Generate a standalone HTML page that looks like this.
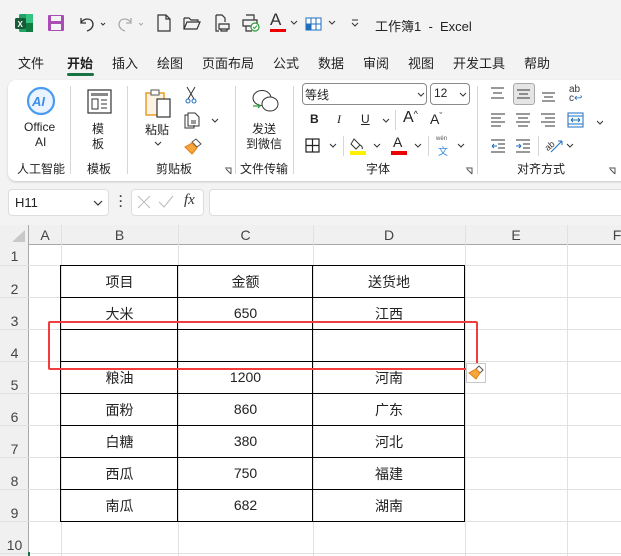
<!DOCTYPE html>
<html><head><meta charset="utf-8"><style>
*{margin:0;padding:0;box-sizing:border-box}
body{width:621px;height:556px;overflow:hidden;background:#f3f3f3;font-family:"Liberation Sans","Noto Sans CJK SC",sans-serif;color:#222;position:relative;font-size:13px}
.a{position:absolute;white-space:nowrap}
.t{font-size:13px}
.s{font-size:12px}
.sep{position:absolute;width:1px;background:#d6d6d6}
.g{position:absolute;background:#e1e1e1}
.tb{position:absolute;background:#000}
.c{position:absolute;text-align:center;font-size:14px;color:#222}
.rh{position:absolute;left:0;width:29px;text-align:center;font-size:14px;color:#444}
.ch{position:absolute;top:227px;text-align:center;font-size:14px;color:#444}
</style></head><body>
<svg class="a" style="left:14px;top:13px" width="20" height="20" viewBox="0 0 20 20"><rect x="5" y="1" width="14" height="18" rx="1.5" fill="#21a366"/><rect x="12" y="1" width="7" height="9" fill="#33c481"/><rect x="12" y="10" width="7" height="9" fill="#107c41"/><rect x="1" y="5" width="11" height="11" rx="1.5" fill="#185c37"/><text x="3.5" y="14" font-size="8" fill="#fff" font-family="Liberation Sans" font-weight="bold">X</text></svg>
<svg class="a" style="left:47px;top:14px" width="18" height="18" viewBox="0 0 18 18"><rect x="1" y="1" width="16" height="16" rx="1" fill="#a94db5"/><rect x="4" y="2" width="10" height="5" fill="#f3f3f3"/><rect x="4" y="10" width="10" height="6" fill="#f3f3f3"/></svg>
<svg class="a" style="left:77px;top:14px" width="34" height="18" viewBox="0 0 34 18"><path d="M4 4v5h5M4 9c2-5 11-6 12 1 0 4-3 6-6 7" fill="none" stroke="#333" stroke-width="1.3"/><path d="M24 9l2 2 2-2" fill="none" stroke="#333"/></svg>
<svg class="a" style="left:115px;top:14px" width="34" height="18" viewBox="0 0 34 18"><path d="M16 4v5h-5M16 9c-2-5-11-6-12 1 0 4 3 6 6 7" fill="none" stroke="#aaa" stroke-width="1.3"/><path d="M24 9l2 2 2-2" fill="none" stroke="#aaa"/></svg>
<svg class="a" style="left:156px;top:14px" width="16" height="18" viewBox="0 0 16 18"><path d="M2 1h8l4 4v12H2z M10 1v4h4" fill="none" stroke="#333" stroke-width="1.2"/></svg>
<svg class="a" style="left:183px;top:15px" width="18" height="16" viewBox="0 0 18 16"><path d="M1 3h5l2 2h7v2M1 3v11h13l3-7H4l-3 7" fill="none" stroke="#333" stroke-width="1.2"/></svg>
<svg class="a" style="left:213px;top:14px" width="18" height="18" viewBox="0 0 18 18"><path d="M3 1h6l3 3v4M3 1v16h3M6 10h10v5H6zM8 15v2h6v-2" fill="none" stroke="#333" stroke-width="1.2"/></svg>
<svg class="a" style="left:241px;top:14px" width="20" height="18" viewBox="0 0 20 18"><path d="M5 1h8v5M2 6h14v6H2zM5 12v5h6" fill="none" stroke="#333" stroke-width="1.2"/><circle cx="14" cy="13" r="4" fill="#fff" stroke="#2a9d3a" stroke-width="1.2"/><path d="M12 13l1.5 1.5 2.5-3" fill="none" stroke="#2a9d3a"/></svg>
<div class="a" style="left:270px;top:10px;font-size:17px;color:#333">A</div>
<div class="a" style="left:270px;top:29px;width:16px;height:3px;background:#e00"></div>
<svg class="a" style="left:290px;top:20px" width="8" height="6"><path d="M1 1l3 3 3-3" fill="none" stroke="#333"/></svg>
<svg class="a" style="left:305px;top:15px" width="17" height="16" viewBox="0 0 17 16"><rect x="1" y="3" width="15" height="12" fill="#fff" stroke="#1e6fc0"/><path d="M1 9h15M6 3v12M11 3v12" stroke="#1e6fc0"/><rect x="1" y="9" width="5" height="6" fill="#1e6fc0"/></svg>
<svg class="a" style="left:328px;top:20px" width="8" height="6"><path d="M1 1l3 3 3-3" fill="none" stroke="#333"/></svg>
<svg class="a" style="left:351px;top:19px" width="8" height="8"><path d="M1 1h6M1 4l3 3 3-3" fill="none" stroke="#333"/></svg>
<div class="a t" style="left:375px;top:16px">工作簿1&nbsp;&nbsp;-&nbsp;&nbsp;Excel</div>
<div class="a t" style="left:18px;top:53px">文件</div>
<div class="a t" style="left:67px;top:53px;font-weight:bold">开始</div>
<div class="a" style="left:67px;top:73px;width:27px;height:3px;background:#1a7343;border-radius:2px"></div>
<div class="a t" style="left:112px;top:53px">插入</div>
<div class="a t" style="left:157px;top:53px">绘图</div>
<div class="a t" style="left:202px;top:53px">页面布局</div>
<div class="a t" style="left:273px;top:53px">公式</div>
<div class="a t" style="left:318px;top:53px">数据</div>
<div class="a t" style="left:363px;top:53px">审阅</div>
<div class="a t" style="left:408px;top:53px">视图</div>
<div class="a t" style="left:453px;top:53px">开发工具</div>
<div class="a t" style="left:524px;top:53px">帮助</div>
<div class="a" style="left:8px;top:80px;width:640px;height:101px;background:#fff;border-radius:8px;box-shadow:0 1px 2px rgba(0,0,0,.18)"></div>
<svg class="a" style="left:25px;top:86px" width="32" height="30" viewBox="0 0 32 30"><circle cx="16" cy="15" r="13" fill="#eaf3ff" stroke="#4a9cf0" stroke-width="2.2"/><text x="7" y="20" font-size="13" font-weight="bold" font-style="italic" fill="#3b8ee8" font-family="Liberation Sans">AI</text></svg>
<div class="a s" style="left:24px;top:120px">Office</div>
<div class="a s" style="left:35px;top:135px">AI</div>
<div class="a s" style="left:17px;top:160px">人工智能</div>
<div class="sep" style="left:70px;top:86px;height:88px"></div>
<svg class="a" style="left:87px;top:89px" width="25" height="25" viewBox="0 0 25 25"><rect x="1" y="1" width="23" height="23" fill="none" stroke="#333" stroke-width="1.2"/><rect x="4" y="4" width="17" height="3" fill="#888"/><rect x="5" y="10" width="6" height="10" fill="none" stroke="#333"/><path d="M14 11h6M14 15h6M14 19h6" stroke="#333"/></svg>
<div class="a s" style="left:92px;top:120px">模</div>
<div class="a s" style="left:92px;top:135px">板</div>
<div class="a s" style="left:87px;top:160px">模板</div>
<div class="sep" style="left:127px;top:86px;height:88px"></div>
<svg class="a" style="left:144px;top:88px" width="30" height="32" viewBox="0 0 30 32"><rect x="2" y="5" width="18" height="22" fill="#fdf3e2" stroke="#e8961c" stroke-width="1.4"/><rect x="7" y="2" width="8" height="5" fill="#fff" stroke="#555"/><rect x="13" y="11" width="13" height="18" fill="#fff" stroke="#333" stroke-width="1.2"/></svg>
<div class="a s" style="left:145px;top:121px">粘贴</div>
<svg class="a" style="left:154px;top:141px" width="8" height="6"><path d="M1 1l3 3 3-3" fill="none" stroke="#333"/></svg>
<svg class="a" style="left:184px;top:86px" width="14" height="18" viewBox="0 0 14 18"><path d="M3 1l7 12M11 1L4 13" stroke="#333"/><circle cx="4" cy="15" r="2" fill="none" stroke="#1e6fc0"/><circle cx="10" cy="15" r="2" fill="none" stroke="#1e6fc0"/></svg>
<svg class="a" style="left:184px;top:112px" width="16" height="17" viewBox="0 0 16 17"><path d="M4 3H1v13h9v-3" fill="none" stroke="#333"/><path d="M4 1h7l4 4v9H4z" fill="none" stroke="#333"/><path d="M7 9h5M7 11h5" stroke="#333"/></svg>
<svg class="a" style="left:211px;top:118px" width="8" height="6"><path d="M1 1l3 3 3-3" fill="none" stroke="#333"/></svg>
<svg class="a" style="left:184px;top:138px" width="18" height="17" viewBox="0 0 18 17"><path d="M12 1l5 5-4 3-5-5z" fill="none" stroke="#555"/><path d="M8 5l5 5-5 6-7-7z" fill="#f6a63d" stroke="#e37f12"/></svg>
<div class="a s" style="left:156px;top:160px">剪贴板</div>
<svg class="a" style="left:224px;top:167px" width="8" height="8"><path d="M1 1h6v6M7 7L2 2" fill="none" stroke="#555"/></svg>
<div class="sep" style="left:235px;top:86px;height:88px"></div>
<svg class="a" style="left:250px;top:88px" width="30" height="26" viewBox="0 0 30 26"><ellipse cx="12" cy="10" rx="9" ry="7.5" fill="#fff" stroke="#333"/><ellipse cx="20" cy="16" rx="8" ry="7" fill="#fff" stroke="#333"/><path d="M3 18h7M8 16l2 2-2 2" fill="none" stroke="#2a9d3a" stroke-width="1.2"/></svg>
<div class="a s" style="left:252px;top:120px">发送</div>
<div class="a s" style="left:246px;top:135px">到微信</div>
<div class="a s" style="left:240px;top:160px">文件传输</div>
<div class="sep" style="left:293px;top:86px;height:88px"></div>
<div class="a" style="left:302px;top:83px;width:125px;height:22px;border:1px solid #8a8a8a;border-radius:4px"></div>
<div class="a s" style="left:305px;top:86px">等线</div>
<svg class="a" style="left:417px;top:92px" width="8" height="6"><path d="M1 1l3 3 3-3" fill="none" stroke="#333"/></svg>
<div class="a" style="left:430px;top:83px;width:40px;height:22px;border:1px solid #8a8a8a;border-radius:4px"></div>
<div class="a s" style="left:434px;top:86px">12</div>
<svg class="a" style="left:459px;top:92px" width="8" height="6"><path d="M1 1l3 3 3-3" fill="none" stroke="#333"/></svg>
<div class="a s" style="left:310px;top:112px;font-weight:bold">B</div>
<div class="a s" style="left:337px;top:112px;font-style:italic;font-family:'Liberation Serif'">I</div>
<div class="a s" style="left:361px;top:112px;text-decoration:underline">U</div>
<svg class="a" style="left:382px;top:118px" width="8" height="6"><path d="M1 1l3 3 3-3" fill="none" stroke="#333"/></svg>
<div class="sep" style="left:395px;top:110px;height:20px"></div>
<div class="a" style="left:403px;top:109px;font-size:16px">A<span style="font-size:9px;vertical-align:top">^</span></div>
<div class="a" style="left:430px;top:111px;font-size:14px">A<span style="font-size:9px;vertical-align:top">ˇ</span></div>
<svg class="a" style="left:305px;top:138px" width="15" height="15"><rect x="1" y="1" width="13" height="13" fill="none" stroke="#222" stroke-width="1.2"/><path d="M7.5 1v13M1 7.5h13" stroke="#222" stroke-width="1.2"/></svg>
<svg class="a" style="left:329px;top:143px" width="8" height="6"><path d="M1 1l3 3 3-3" fill="none" stroke="#333"/></svg>
<div class="sep" style="left:343px;top:136px;height:20px"></div>
<svg class="a" style="left:350px;top:136px" width="16" height="14"><path d="M4 3l6 6-4 4-5-5zM10 9c2 1 3 3 2 4" fill="none" stroke="#333"/></svg>
<div class="a" style="left:350px;top:151px;width:16px;height:4px;background:#ffef00"></div>
<svg class="a" style="left:373px;top:143px" width="8" height="6"><path d="M1 1l3 3 3-3" fill="none" stroke="#333"/></svg>
<div class="a" style="left:393px;top:134px;font-size:14px">A</div>
<div class="a" style="left:391px;top:151px;width:16px;height:4px;background:#e00"></div>
<svg class="a" style="left:414px;top:143px" width="8" height="6"><path d="M1 1l3 3 3-3" fill="none" stroke="#333"/></svg>
<div class="sep" style="left:428px;top:136px;height:20px"></div>
<div class="a" style="left:436px;top:136px;font-size:6px;color:#555">wén</div>
<div class="a" style="left:438px;top:143px;font-size:10px;color:#3a8ee0">文</div>
<svg class="a" style="left:457px;top:143px" width="8" height="6"><path d="M1 1l3 3 3-3" fill="none" stroke="#333"/></svg>
<div class="a s" style="left:366px;top:160px">字体</div>
<svg class="a" style="left:465px;top:167px" width="8" height="8"><path d="M1 1h6v6M7 7L2 2" fill="none" stroke="#555"/></svg>
<div class="sep" style="left:477px;top:86px;height:88px"></div>
<svg class="a" style="left:490px;top:86px" width="16" height="14"><path d="M1 2h13M3 7h9M1 12h13" stroke="#333"/></svg>
<div class="a" style="left:513px;top:83px;width:22px;height:22px;background:#e5e5e5;border:1px solid #aaa;border-radius:3px"></div>
<svg class="a" style="left:516px;top:88px" width="16" height="14"><path d="M1 2h13M3 6h9M1 10h13" stroke="#333"/></svg>
<svg class="a" style="left:541px;top:90px" width="16" height="14"><path d="M1 3h13M3 7h9M1 11h13" stroke="#333"/></svg>
<div class="a" style="left:569px;top:85px;font-size:10px;line-height:9px;color:#333">ab<br>c<span style="color:#1e6fc0">↩</span></div>
<svg class="a" style="left:490px;top:112px" width="16" height="16"><path d="M1 2h14M1 6h10M1 10h14M1 14h10" stroke="#333"/></svg>
<svg class="a" style="left:515px;top:112px" width="16" height="16"><path d="M1 2h14M3 6h10M1 10h14M3 14h10" stroke="#333"/></svg>
<svg class="a" style="left:540px;top:112px" width="16" height="16"><path d="M1 2h14M5 6h10M1 10h14M5 14h10" stroke="#333"/></svg>
<svg class="a" style="left:567px;top:112px" width="17" height="16"><rect x="1" y="1" width="15" height="14" fill="none" stroke="#1e6fc0"/><path d="M1 4h15M1 12h15M4 8h9M4 8l2-2M4 8l2 2M13 8l-2-2M13 8l-2 2" stroke="#1e6fc0" fill="none"/></svg>
<svg class="a" style="left:596px;top:120px" width="8" height="6"><path d="M1 1l3 3 3-3" fill="none" stroke="#333"/></svg>
<svg class="a" style="left:490px;top:138px" width="16" height="16"><path d="M2 8h5M2 8l2-2M2 8l2 2" stroke="#1e6fc0" fill="none"/><path d="M1 2h14M8 6h7M8 10h7M1 14h14" stroke="#333"/></svg>
<svg class="a" style="left:515px;top:138px" width="16" height="16"><path d="M1 2h14M8 6h7M8 10h7M1 14h14" stroke="#333"/><path d="M1 8h5M6 8l-2-2M6 8l-2 2" stroke="#1e6fc0" fill="none"/></svg>
<div class="sep" style="left:538px;top:136px;height:20px"></div>
<svg class="a" style="left:545px;top:136px" width="18" height="18"><text x="0" y="12" font-size="9" fill="#333" transform="rotate(-40 6 10)" font-family="Liberation Sans">ab</text><path d="M6 16L17 5M17 5h-4M17 5v4" stroke="#1e6fc0" fill="none"/></svg>
<svg class="a" style="left:566px;top:143px" width="8" height="6"><path d="M1 1l3 3 3-3" fill="none" stroke="#333"/></svg>
<div class="a s" style="left:517px;top:160px">对齐方式</div>
<svg class="a" style="left:608px;top:167px" width="8" height="8"><path d="M1 1h6v6M7 7L2 2" fill="none" stroke="#555"/></svg>
<div class="a" style="left:8px;top:189px;width:101px;height:27px;background:#fff;border:1px solid #ddd;border-radius:4px"></div>
<div class="a" style="left:15px;top:195px;font-size:13px">H11</div>
<svg class="a" style="left:93px;top:200px" width="10" height="7"><path d="M1 1l4 4 4-4" fill="none" stroke="#333" stroke-width="1.2"/></svg>
<div class="a" style="left:119px;top:194px;font-size:12px;font-weight:bold;line-height:5px;color:#444">·<br>·<br>·</div>
<div class="a" style="left:131px;top:189px;width:73px;height:27px;background:#fff;border:1px solid #ddd;border-radius:4px"></div>
<svg class="a" style="left:136px;top:195px" width="16" height="14"><path d="M2 1l12 12M14 1L2 13" stroke="#bbb"/></svg>
<svg class="a" style="left:158px;top:195px" width="16" height="14"><path d="M1 7l5 5 9-11" fill="none" stroke="#bbb"/></svg>
<div class="a" style="left:184px;top:192px;font-size:15px;font-style:italic;font-family:'Liberation Serif';color:#333">fx</div>
<div class="a" style="left:209px;top:189px;width:420px;height:27px;background:#fff;border:1px solid #ddd;border-radius:4px"></div>
<div class="a" style="left:0;top:225px;width:621px;height:331px;background:#fff"></div>
<div class="a" style="left:0;top:225px;width:621px;height:20px;background:#f0f0f0;border-bottom:1px solid #a8a8a8"></div>
<div class="a" style="left:0;top:225px;width:29px;height:331px;background:#f0f0f0;border-right:1px solid #a8a8a8"></div>
<svg class="a" style="left:11px;top:229px" width="15" height="14"><path d="M14 1v12H1z" fill="#c8c8c8"/></svg>
<div class="g" style="left:61px;top:225px;width:1px;height:331px"></div>
<div class="g" style="left:178px;top:225px;width:1px;height:331px"></div>
<div class="g" style="left:313px;top:225px;width:1px;height:331px"></div>
<div class="g" style="left:465px;top:225px;width:1px;height:331px"></div>
<div class="g" style="left:567px;top:225px;width:1px;height:331px"></div>
<div class="g" style="left:0;top:265px;width:621px;height:1px"></div>
<div class="g" style="left:0;top:297px;width:621px;height:1px"></div>
<div class="g" style="left:0;top:329px;width:621px;height:1px"></div>
<div class="g" style="left:0;top:361px;width:621px;height:1px"></div>
<div class="g" style="left:0;top:393px;width:621px;height:1px"></div>
<div class="g" style="left:0;top:425px;width:621px;height:1px"></div>
<div class="g" style="left:0;top:457px;width:621px;height:1px"></div>
<div class="g" style="left:0;top:489px;width:621px;height:1px"></div>
<div class="g" style="left:0;top:521px;width:621px;height:1px"></div>
<div class="g" style="left:0;top:553px;width:621px;height:1px"></div>
<div class="ch" style="left:29px;width:32px">A</div>
<div class="ch" style="left:61px;width:117px">B</div>
<div class="ch" style="left:178px;width:135px">C</div>
<div class="ch" style="left:313px;width:152px">D</div>
<div class="ch" style="left:465px;width:102px">E</div>
<div class="ch" style="left:567px;width:100px">F</div>
<div class="rh" style="top:248px">1</div>
<div class="rh" style="top:281px">2</div>
<div class="rh" style="top:313px">3</div>
<div class="rh" style="top:345px">4</div>
<div class="rh" style="top:377px">5</div>
<div class="rh" style="top:409px">6</div>
<div class="rh" style="top:441px">7</div>
<div class="rh" style="top:473px">8</div>
<div class="rh" style="top:505px">9</div>
<div class="rh" style="top:537px">10</div>
<div class="tb" style="left:60px;top:265px;width:1px;height:257px"></div>
<div class="tb" style="left:177px;top:265px;width:1px;height:257px"></div>
<div class="tb" style="left:312px;top:265px;width:1px;height:257px"></div>
<div class="tb" style="left:464px;top:265px;width:1px;height:257px"></div>
<div class="tb" style="left:60px;top:265px;width:405px;height:1px"></div>
<div class="tb" style="left:60px;top:297px;width:405px;height:1px"></div>
<div class="tb" style="left:60px;top:329px;width:405px;height:1px"></div>
<div class="tb" style="left:60px;top:361px;width:405px;height:1px"></div>
<div class="tb" style="left:60px;top:393px;width:405px;height:1px"></div>
<div class="tb" style="left:60px;top:425px;width:405px;height:1px"></div>
<div class="tb" style="left:60px;top:457px;width:405px;height:1px"></div>
<div class="tb" style="left:60px;top:489px;width:405px;height:1px"></div>
<div class="tb" style="left:60px;top:521px;width:405px;height:1px"></div>
<div class="c" style="left:61px;width:117px;top:272px">项目</div>
<div class="c" style="left:178px;width:135px;top:272px">金额</div>
<div class="c" style="left:313px;width:152px;top:272px">送货地</div>
<div class="c" style="left:61px;width:117px;top:304px">大米</div>
<div class="c" style="left:178px;width:135px;top:305px">650</div>
<div class="c" style="left:313px;width:152px;top:304px">江西</div>
<div class="c" style="left:61px;width:117px;top:368px">粮油</div>
<div class="c" style="left:178px;width:135px;top:369px">1200</div>
<div class="c" style="left:313px;width:152px;top:368px">河南</div>
<div class="c" style="left:61px;width:117px;top:400px">面粉</div>
<div class="c" style="left:178px;width:135px;top:401px">860</div>
<div class="c" style="left:313px;width:152px;top:400px">广东</div>
<div class="c" style="left:61px;width:117px;top:432px">白糖</div>
<div class="c" style="left:178px;width:135px;top:433px">380</div>
<div class="c" style="left:313px;width:152px;top:432px">河北</div>
<div class="c" style="left:61px;width:117px;top:464px">西瓜</div>
<div class="c" style="left:178px;width:135px;top:465px">750</div>
<div class="c" style="left:313px;width:152px;top:464px">福建</div>
<div class="c" style="left:61px;width:117px;top:496px">南瓜</div>
<div class="c" style="left:178px;width:135px;top:497px">682</div>
<div class="c" style="left:313px;width:152px;top:496px">湖南</div>
<div class="a" style="left:48px;top:321px;width:430px;height:49px;border:2px solid #f03c3c;border-radius:2px"></div>
<div class="a" style="left:466px;top:363px;width:20px;height:20px;background:#fff;border:1px solid #c8c8c8"></div>
<svg class="a" style="left:468px;top:365px" width="16" height="16"><path d="M11 1l4 4-3 3-4-4z" fill="none" stroke="#555"/><path d="M8 4l4 4-4 6-7-6z" fill="#f6a63d" stroke="#e37f12"/></svg>
<div class="a" style="left:28px;top:552px;width:2px;height:4px;background:#1a7343"></div>
</body></html>
